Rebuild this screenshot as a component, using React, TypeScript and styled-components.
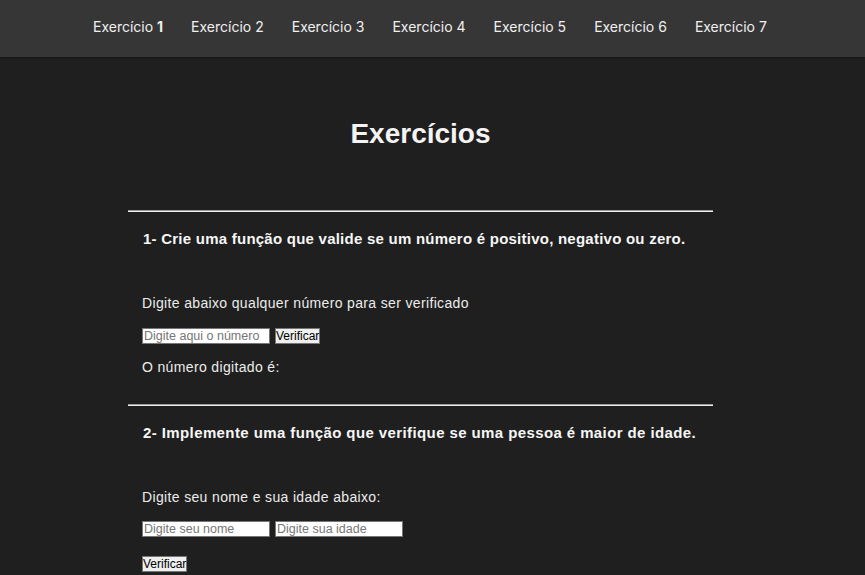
import React from "react";
import styled, { createGlobalStyle } from "styled-components";

const Global = createGlobalStyle`
  html, body { margin: 0; padding: 0; background: #1f1f1f; }
  body { font-family: "Liberation Sans", Arial, sans-serif; color: #f2f2f2; }
  * { box-sizing: border-box; }
`;

const Header = styled.nav`
  height: 57px;
  background: #363636;
  display: flex;
  align-items: center;
  padding-left: 93px;
  gap: 28px;
  box-shadow: 0 1px 2px rgba(0, 0, 0, 0.35);
`;

const NavLink = styled.a`
  font-family: Inter, "Liberation Sans", sans-serif;
  font-size: 14px;
  color: #f0f0f0;
  text-decoration: none;
  white-space: nowrap;
  line-height: 20px;
  margin-top: -4px;
`;

const Num = styled.span<{ $strong?: boolean }>`
  font-weight: ${(p) => (p.$strong ? 700 : 400)};
`;

const Main = styled.main`
  width: 585px;
  margin-left: 128px;
`;

const Title = styled.h1`
  margin: 61px 0 60px;
  font-size: 28px;
  line-height: 32px;
  font-weight: 700;
  text-align: center;
  color: #f4f4f4;
`;

const Rule = styled.hr`
  margin: 0;
  height: 0;
  border: none;
  border-top: 1px solid #9c9c9c;
  border-bottom: 1px solid #ececec;
`;

const Section = styled.section<{ $last?: boolean }>`
  padding: 17px 0 0 14px;
  margin-bottom: ${(p) => (p.$last ? "0" : "27px")};
`;

const Question = styled.h3<{ $spacing: number }>`
  margin: 0 0 44px 1px;
  font-size: 15px;
  line-height: 20px;
  font-weight: 700;
  letter-spacing: ${(p) => p.$spacing}px;
  color: #f6f6f6;
  white-space: nowrap;
`;

const Text = styled.p<{ $gap?: number }>`
  margin: 0 0 ${(p) => p.$gap ?? 0}px;
  font-size: 14px;
  line-height: 20px;
  letter-spacing: 0.35px;
  color: #ececec;
`;

const Row = styled.div<{ $gap?: number }>`
  display: flex;
  gap: 5px;
  margin-bottom: ${(p) => p.$gap ?? 0}px;
`;

const Field = styled.input`
  width: 128px;
  height: 16px;
  padding: 0 1px;
  border: 1px solid #767676;
  background: #fff;
  font-family: "Liberation Sans", Arial, sans-serif;
  font-size: 12.5px;
  line-height: 14px;
  color: #000;
  &::placeholder { color: #767676; }
`;

const Button = styled.button`
  height: 16px;
  padding: 0;
  border: 1px solid #767676;
  background: #efefef;
  font-family: "Liberation Sans", Arial, sans-serif;
  font-size: 12px;
  line-height: 14px;
  color: #000;
`;

export default function App() {
  return (
    <>
      <Global />
      <Header>
        {[1, 2, 3, 4, 5, 6, 7].map((n) => (
          <NavLink key={n} href="#">
            Exercício <Num $strong={n === 1}>{n}</Num>
          </NavLink>
        ))}
      </Header>
      <Main>
        <Title>Exercícios</Title>
        <Rule />
        <Section>
          <Question $spacing={0.24}>
            1- Crie uma função que valide se um número é positivo, negativo ou zero.
          </Question>
          <Text $gap={15}>Digite abaixo qualquer número para ser verificado</Text>
          <Row $gap={13}>
            <Field placeholder="Digite aqui o número" />
            <Button>Verificar</Button>
          </Row>
          <Text>O número digitado é:</Text>
        </Section>
        <Rule />
        <Section $last>
          <Question $spacing={0.4}>
            2- Implemente uma função que verifique se uma pessoa é maior de idade.
          </Question>
          <Text $gap={14}>Digite seu nome e sua idade abaixo:</Text>
          <Row $gap={17}>
            <Field placeholder="Digite seu nome" />
            <Field placeholder="Digite sua idade" />
          </Row>
          <Button>Verificar</Button>
        </Section>
      </Main>
    </>
  );
}
